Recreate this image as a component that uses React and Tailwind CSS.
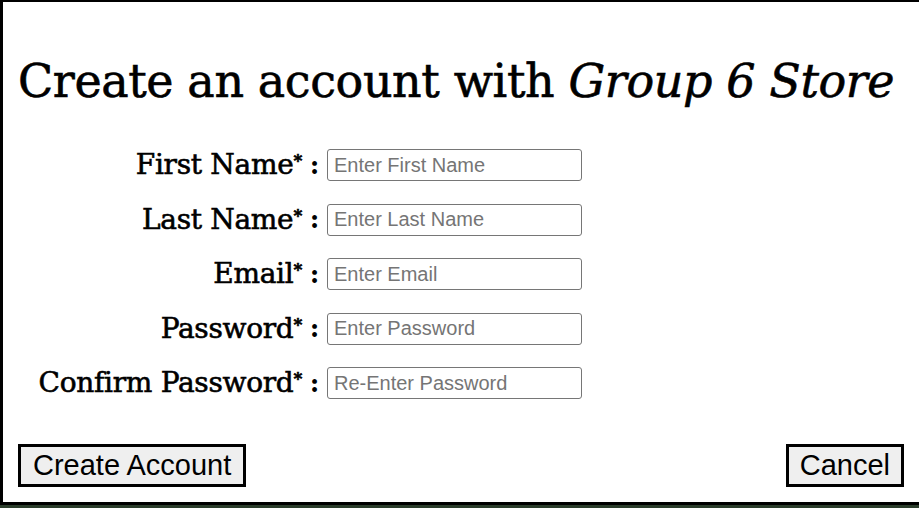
import React from 'react'

const fields = [
  { label: 'First Name', placeholder: 'Enter First Name', type: 'text' },
  { label: 'Last Name', placeholder: 'Enter Last Name', type: 'text' },
  { label: 'Email', placeholder: 'Enter Email', type: 'email' },
  { label: 'Password', placeholder: 'Enter Password', type: 'password' },
  { label: 'Confirm Password', placeholder: 'Re-Enter Password', type: 'password' },
]

const slab = { fontFamily: '"DejaVu Serif", serif' }
const sans = { fontFamily: '"Liberation Sans", Arial, sans-serif' }

const App = () => {
  return (
    <div className="h-screen overflow-hidden bg-[#2c3e2c]">
      <div className="w-[922px] h-[505px] border-[3px] border-t-2 border-r-0 border-black bg-white pl-[15px] pr-[18px] flex flex-col">
        {/* Title */}
        <h1 className="mt-[51px] text-[46px] leading-[56px] text-black tracking-[-0.4px] [-webkit-text-stroke:0.6px_black]" style={slab}>
          Create an account with <em>Group 6 Store</em>
        </h1>

        {/* Form */}
        <div className="mt-[40px] flex flex-col gap-[22.5px]">
          {fields.map((f) => (
            <div key={f.label} className="flex items-center h-[32px]">
              <label className="w-[284px] text-right text-[28px] text-black whitespace-nowrap tracking-[-0.3px] [-webkit-text-stroke:0.6px_black]" style={slab}>
                {f.label}<sup className="text-[17px] font-bold top-[-0.45em]">*</sup>
              </label>
              <span className="w-[25px] text-center text-[26px] font-bold text-black" style={slab}>:</span>
              <input
                type={f.type}
                placeholder={f.placeholder}
                className="w-[255px] h-[32px] border border-[#767676] rounded-[3px] px-[6px] text-[20px] placeholder:text-[#757575] outline-none"
                style={sans}
              />
            </div>
          ))}
        </div>

        {/* Buttons */}
        <div className="mt-auto mb-[15px] flex justify-between items-center">
          <button className="h-[43px] px-[12px] border-[3px] border-black bg-[#efefef] text-[29px] leading-[34px] pb-[2px] text-black" style={sans}>
            Create Account
          </button>
          <button className="h-[43px] px-[11px] border-[3px] border-black bg-[#efefef] text-[29px] leading-[34px] pb-[2px] text-black" style={sans}>
            Cancel
          </button>
        </div>
      </div>
    </div>
  )
}

export default App
